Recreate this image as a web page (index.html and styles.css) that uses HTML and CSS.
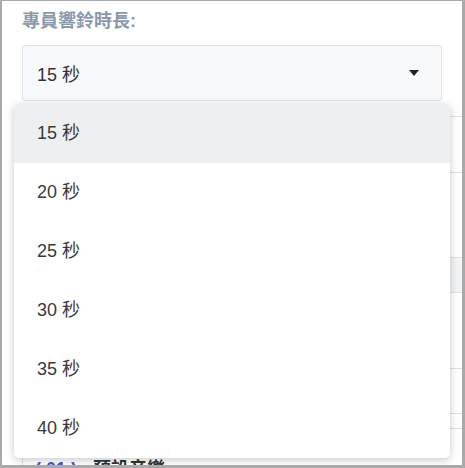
FILE: index.html
```html
<!DOCTYPE html>
<html lang="zh-Hant">
<head>
    <meta charset="UTF-8">
    <meta name="viewport" content="width=device-width, initial-scale=1.0">
    <title>專員響鈴時長</title>
    <link rel="stylesheet" href="styles.css">
</head>
<body>
    <div class="frame">
        <div class="panel">
            <div class="field-label">專員響鈴時長:</div>

            <div class="select-wrap">
                <div class="select">
                    <span>15 秒</span>
                    <span class="caret"></span>
                </div>

                <!-- open dropdown -->
                <ul class="menu">
                    <li class="active">15 秒</li>
                    <li>20 秒</li>
                    <li>25 秒</li>
                    <li>30 秒</li>
                    <li>35 秒</li>
                    <li>40 秒</li>
                </ul>
            </div>

            <div class="table">
                <div class="row r1"></div>
                <div class="row r2"></div>
                <div class="row r3"></div>
                <div class="row r4"></div>
                <div class="row r5"></div>
                <div class="row r6"></div>
                <div class="row r7">
                    <span class="code">( 01 )</span>
                    <span class="name">預設音樂</span>
                </div>
            </div>
        </div>
    </div>
</body>
</html>
```

FILE: styles.css
```css
* {
    margin: 0;
    padding: 0;
    box-sizing: border-box;
    font-family: 'Liberation Sans', 'Noto Sans CJK TC', sans-serif;
}

body {
    background: #fff;
}

.frame {
    width: 465px;
    height: 468px;
    border-style: solid;
    border-color: #a9a9a9;
    border-width: 1px 3px 3px 2px;
    overflow: hidden;
    background: #fff;
}

.panel {
    padding: 8px 0 0 20px;
}

.field-label {
    font-size: 18px;
    line-height: 24px;
    font-weight: bold;
    color: #8a9aab;
    margin-bottom: 12px;
}

.select-wrap {
    position: relative;
    width: 420px;
}

.select {
    height: 56px;
    display: flex;
    align-items: center;
    justify-content: space-between;
    padding: 0 22px 0 14px;
    background: #f8f9fa;
    border: 1px solid #dee2e6;
    border-radius: 3px;
    font-size: 18px;
    color: #333;
}

.caret {
    width: 0;
    height: 0;
    border-left: 5px solid transparent;
    border-right: 5px solid transparent;
    border-top: 6px solid #222;
}

.menu {
    position: absolute;
    top: 59px;
    left: -8px;
    width: 436px;
    list-style: none;
    background: #fff;
    border-radius: 5px;
    box-shadow: 0 2px 8px rgba(0, 0, 0, 0.22);
    overflow: hidden;
    z-index: 10;
}

.menu li {
    height: 59px;
    line-height: 59px;
    padding-left: 23px;
    font-size: 18px;
    color: #3a3a3a;
}

.menu li.active {
    background: #eeeff1;
}

.table {
    margin-top: 15px;
    width: 460px;
    border-top: 1px solid #dee2e6;
    border-left: 1px solid #dee2e6;
}

.row {
    border-bottom: 1px solid #dee2e6;
}

.r1 { height: 56px; }
.r2 { height: 85px; }
.r3 { height: 35px; background: #f3f4f6; }
.r4 { height: 76px; }
.r5 { height: 45px; }
.r6 { height: 15px; }

.r7 {
    display: flex;
    gap: 16px;
    padding: 28px 0 0 12px;
    font-size: 18px;
    line-height: 24px;
}

.code {
    color: #4b55c4;
    font-weight: bold;
}

.name {
    color: #333;
    font-weight: bold;
}
```
